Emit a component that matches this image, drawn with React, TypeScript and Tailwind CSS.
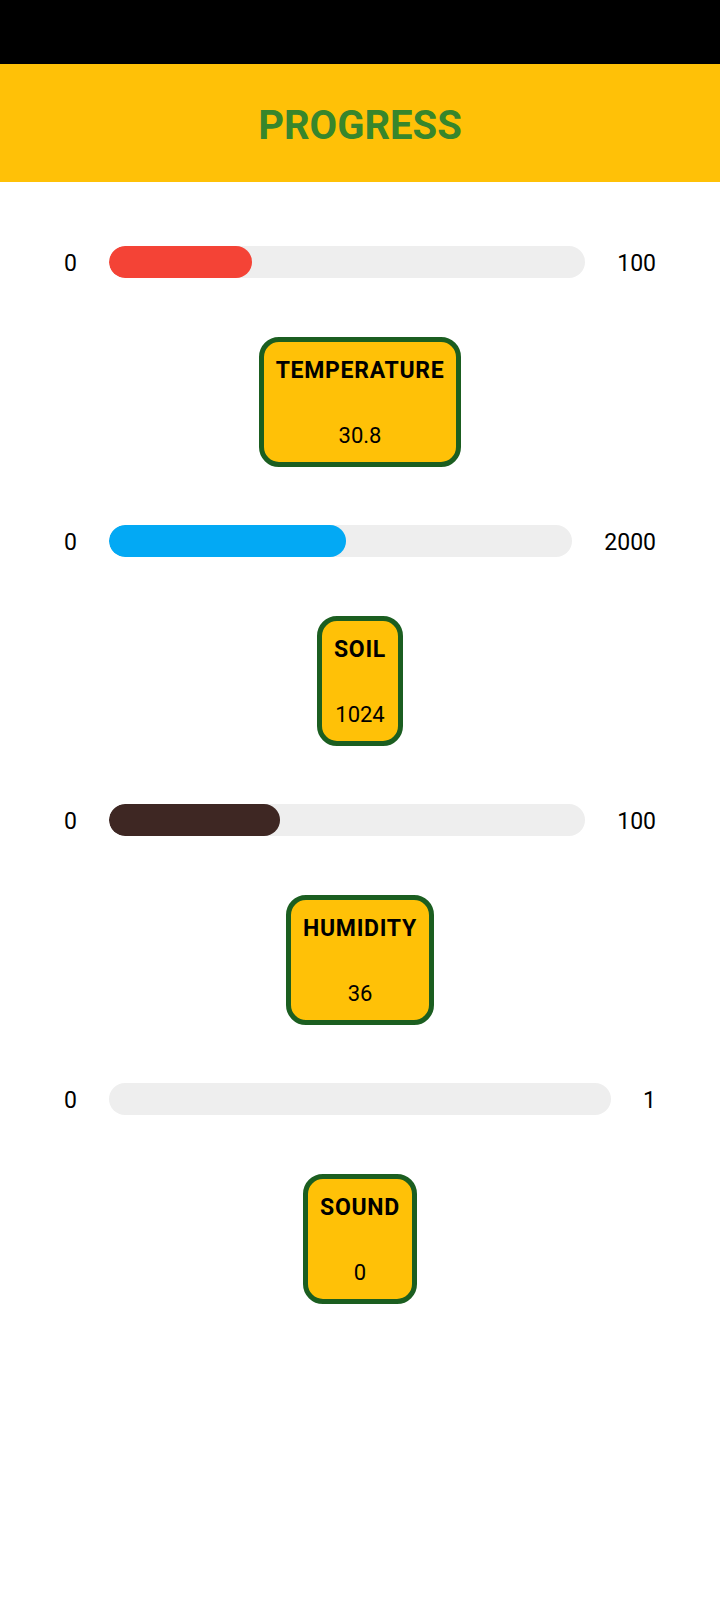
import React from "react";

interface Reading {
  name: string;
  value: number;
  max: number;
  color: string;
}

const readings: Reading[] = [
  { name: "TEMPERATURE", value: 30.8, max: 100, color: "bg-[#F44336]" },
  { name: "SOIL", value: 1024, max: 2000, color: "bg-[#03A9F4]" },
  { name: "HUMIDITY", value: 36, max: 100, color: "bg-[#3E2723]" },
  { name: "SOUND", value: 0, max: 1, color: "bg-[#3E2723]" },
];

const ProgressRow: React.FC<{ reading: Reading }> = ({ reading }) => {
  const pct = Math.min(100, (Math.floor(reading.value) / reading.max) * 100);
  return (
    <div className="flex h-8 items-center gap-8 text-[23px] leading-[26px] text-black">
      <span className="pt-1">0</span>
      <div className="h-8 flex-1 overflow-hidden rounded-full bg-[#EEEEEE]">
        {pct > 0 && (
          <div
            className={`h-full rounded-full ${reading.color}`}
            style={{ width: `${pct}%` }}
          />
        )}
      </div>
      <span className="pt-1">{reading.max}</span>
    </div>
  );
};

const ValueCard: React.FC<{ reading: Reading }> = ({ reading }) => (
  <div className="mx-auto mt-[59px] flex w-fit flex-col items-center gap-[39px] rounded-[20px] border-[5px] border-[#1B5E20] bg-[#FFC107] px-3 pb-[13px] pt-[16px] text-[22px] leading-[26px] text-black">
    <span className="text-[23px] font-bold tracking-[0.7px]">{reading.name}</span>
    <span>{reading.value}</span>
  </div>
);

export default function App() {
  return (
    <div
      className="min-h-[1600px] bg-white"
      style={{ fontFamily: "Roboto, 'Noto Sans', sans-serif" }}
    >
      {/* status bar */}
      <div className="h-16 bg-black" />

      <header className="flex h-[118px] items-center justify-center bg-[#FFC107] pt-[5px]">
        <h1 className="text-[40px] font-bold leading-none text-[#37862C]">
          PROGRESS
        </h1>
      </header>

      <main className="flex flex-col gap-[58px] px-16 pt-16">
        {readings.map((r) => (
          <section key={r.name}>
            <ProgressRow reading={r} />
            <ValueCard reading={r} />
          </section>
        ))}
      </main>
    </div>
  );
}
